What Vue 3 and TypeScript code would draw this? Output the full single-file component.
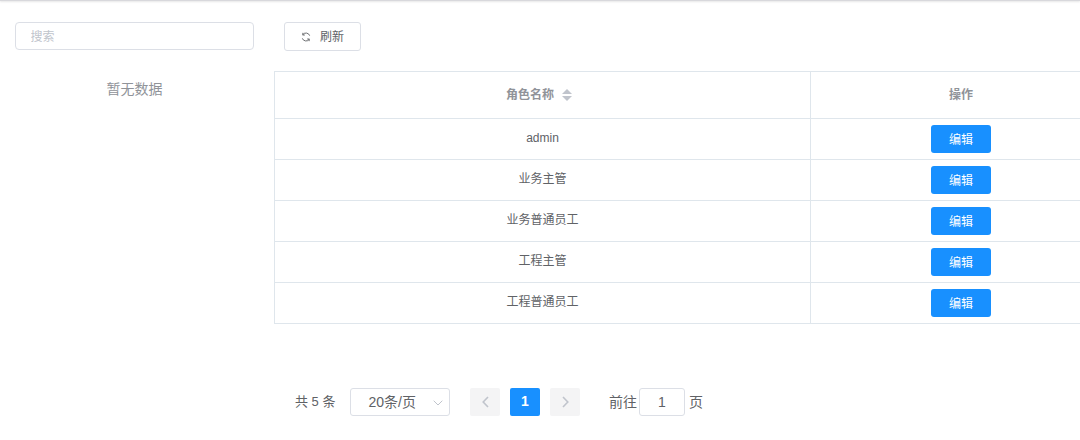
<script setup lang="ts">
const roles: string[] = ['admin', '业务主管', '业务普通员工', '工程主管', '工程普通员工']
</script>

<template>
  <div class="page">
    <div class="topline"></div>
    <div class="body">
      <aside class="side">
        <input class="search" placeholder="搜索" />
        <div class="empty">暂无数据</div>
      </aside>
      <main class="content">
        <div class="toolbar">
          <button class="refresh" type="button">
            <svg class="ri" viewBox="0 0 12 12" fill="none" stroke="#606266" stroke-width="1.1">
              <path d="M10.4 4.4A4.7 4.7 0 0 0 2 3.4" />
              <path d="M1.6 7.6A4.7 4.7 0 0 0 10 8.6" />
              <path d="M2.2 1V3.6H4.6" />
              <path d="M9.8 11V8.4H7.4" />
            </svg>
            <span class="rt">刷新</span>
          </button>
        </div>
        <div class="table">
          <div class="row head">
            <div class="c1">
              <span class="ht">角色名称</span>
              <span class="sort"><i class="up"></i><i class="down"></i></span>
            </div>
            <div class="c2"><span class="ht">操作</span></div>
          </div>
          <div v-for="r in roles" :key="r" class="row">
            <div class="c1">{{ r }}</div>
            <div class="c2"><button class="edit" type="button">编辑</button></div>
          </div>
        </div>
        <div class="pager">
          <span class="total">共 5 条</span>
          <div class="size">
            <span>20条/页</span>
            <svg class="chev" viewBox="0 0 10 6" fill="none" stroke="#c0c4cc" stroke-width="1"><path d="M0.7 0.7L5 5L9.3 0.7" /></svg>
          </div>
          <button class="nav" type="button">
            <svg viewBox="0 0 7 12" fill="none" stroke="#c0c4cc" stroke-width="1.6"><path d="M6 1L1.2 6L6 11" /></svg>
          </button>
          <button class="num" type="button">1</button>
          <button class="nav" type="button">
            <svg viewBox="0 0 7 12" fill="none" stroke="#c0c4cc" stroke-width="1.6"><path d="M1 1L5.8 6L1 11" /></svg>
          </button>
          <span class="goto">前往</span>
          <div class="jump">1</div>
          <span class="pg">页</span>
        </div>
      </main>
    </div>
  </div>
</template>

<style>
html, body { margin: 0; background: #fff; overflow: hidden; }
</style>

<style scoped>
.page {
  width: 1080px;
  height: 440px;
  overflow: hidden;
  font-family: "Liberation Sans", "Noto Sans CJK SC", sans-serif;
  color: #606266;
}
.topline {
  height: 1px;
  background: #d8d8dc;
  box-shadow: 0 1px 2px rgba(0, 0, 0, 0.14);
}
.body {
  display: flex;
  padding-top: 21px;
  padding-left: 15px;
}
.side {
  width: 239px;
  flex: none;
  display: flex;
  flex-direction: column;
}
.search {
  box-sizing: border-box;
  width: 239px;
  height: 28px;
  border: 1px solid #dcdfe6;
  border-radius: 4px;
  padding: 2px 0 0 14.5px;
  font: 12px "Liberation Sans", "Noto Sans CJK SC", sans-serif;
  outline: none;
}
.search::placeholder { color: #c0c4cc; opacity: 1; }
.empty {
  margin-top: 29px;
  text-align: center;
  font-size: 14px;
  line-height: 20px;
  color: #909399;
}
.content {
  margin-left: 20px;
  width: 900px;
  flex: none;
}
.toolbar { padding-left: 10px; }
.refresh {
  box-sizing: border-box;
  width: 77px;
  height: 29px;
  display: flex;
  align-items: center;
  padding: 0 0 0 16px;
  gap: 9px;
  background: #fff;
  border: 1px solid #dcdfe6;
  border-radius: 3px;
  font: 12px "Liberation Sans", "Noto Sans CJK SC", sans-serif;
  color: #606266;
}
.ri { width: 10px; height: 10px; }
.rt { padding-bottom: 2px; }
.table {
  margin-top: 20px;
  border-top: 1px solid #dfe6ec;
  border-left: 1px solid #dfe6ec;
  font-size: 12px;
}
.row {
  display: flex;
  height: 41px;
  box-sizing: border-box;
  border-bottom: 1px solid #dfe6ec;
}
.row.head {
  height: 47px;
  font-weight: 700;
  color: #909399;
}
.c1, .c2 {
  display: flex;
  align-items: center;
  justify-content: center;
}
.c1 {
  width: 536px;
  flex: none;
  box-sizing: border-box;
  border-right: 1px solid #dfe6ec;
}
.c2 {
  width: 300px;
  flex: none;
}
.row:not(.head) .c1 { padding-bottom: 5px; }
.row:nth-child(2) .c1 { padding-bottom: 2px; }
.row.head .c1 { gap: 8px; padding-right: 7px; }
.row.head .c2 { padding-right: 2px; }
.ht { padding-bottom: 4px; }
.sort {
  display: flex;
  flex-direction: column;
  gap: 2px;
  padding-bottom: 1px;
}
.sort i {
  display: block;
  width: 0;
  height: 0;
  border-left: 5px solid transparent;
  border-right: 5px solid transparent;
}
.up { border-bottom: 5px solid #c0c4cc; }
.down { border-top: 5px solid #c0c4cc; }
.edit {
  width: 60px;
  height: 28px;
  background: #1890ff;
  color: #fff;
  border: 0;
  border-radius: 3px;
  padding: 0 0 2px;
  font: 12px "Liberation Sans", "Noto Sans CJK SC", sans-serif;
}
.pager {
  margin-top: 64px;
  margin-left: 21px;
  display: flex;
  align-items: center;
  height: 28px;
  font-size: 14px;
}
.total { width: 55px; font-size: 13px; padding-bottom: 4px; }
.size {
  box-sizing: border-box;
  width: 100px;
  height: 28px;
  border: 1px solid #dcdfe6;
  border-radius: 3px;
  display: flex;
  align-items: center;
  padding: 0 0 3px 17.5px;
  position: relative;
  margin-right: 20px;
}
.chev {
  position: absolute;
  right: 6px;
  top: 11px;
  width: 10px;
  height: 6px;
}
.nav {
  width: 30px;
  height: 28px;
  background: #f4f4f5;
  border: 0;
  border-radius: 2px;
  padding: 0;
  display: flex;
  align-items: center;
  justify-content: center;
}
.nav svg { width: 7px; height: 12px; }
.num {
  width: 30px;
  height: 28px;
  margin: 0 10px;
  background: #1890ff;
  color: #fff;
  border: 0;
  border-radius: 2px;
  padding: 0 0 2px;
  font: 700 14px "Liberation Sans", sans-serif;
}
.goto { margin-left: 29px; width: 30px; padding-bottom: 2px; }
.jump {
  box-sizing: border-box;
  width: 46px;
  height: 28px;
  margin: 0 4px 0 0;
  border: 1px solid #dcdfe6;
  border-radius: 3px;
  display: flex;
  align-items: center;
  justify-content: center;
}
.pg { padding-bottom: 2px; }
</style>
